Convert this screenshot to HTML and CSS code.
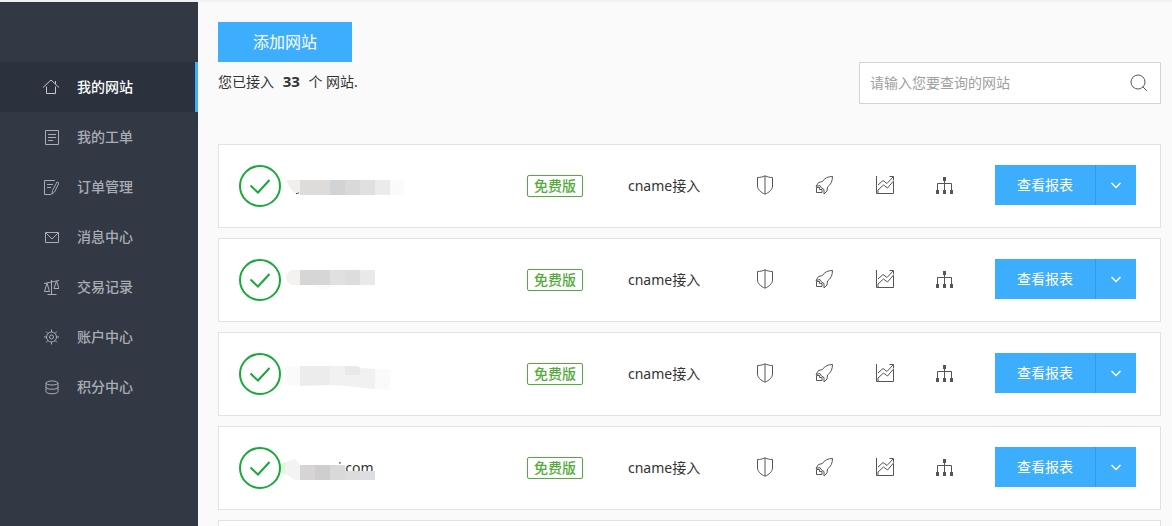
FILE: index.html
```
<!DOCTYPE html>
<html lang="zh-CN">
<head>
    <meta charset="UTF-8">
    <meta name="viewport" content="width=device-width, initial-scale=1.0">
    <title>我的网站</title>
    <link rel="stylesheet" href="styles.css">
</head>
<body>
    <!-- icon shapes used by the rows -->
    <svg class="symbols" aria-hidden="true">
        <symbol id="check" viewBox="0 0 42 42">
            <circle cx="21" cy="21" r="20" />
            <path d="M11.5 20.5l7.500 7L30.500 15" />
        </symbol>
        <symbol id="shield" viewBox="0 0 20 20">
            <path d="M10 .8C7.500 2 5 2.500 2.500 2.500V11c0 3.500 3.500 6.500 7.500 8.200 4-1.700 7.500-4.700 7.500-8.200V2.500C15 2.500 12.500 2 10 .8zM10 1v18" />
        </symbol>
        <symbol id="rocket" viewBox="0 0 20 20">
            <path d="M17.500 1.500C13 1.500 9.500 3 7.500 6.500L3.500 7.500 1 11.500l4-1 1.500 2.500 2.500 1.500V19l3-3 .5-4C16 9.500 17.500 6 17.500 1.500zM4.500 12.500h-3v5h5.500v-3H4.500z" />
        </symbol>
        <symbol id="chart" viewBox="0 0 20 20">
            <path d="M1.500 1v17.500h17V6.500M3 18v-3l5.500-5 4 3 6-7M3 10l5-4.500 4 3 6-6.500M14.500 1.500h4v4" />
        </symbol>
        <symbol id="tree" viewBox="0 0 20 20">
            <path d="M9.500 4v12M2.500 15V8.500h14V15" />
            <path class="solid" d="M8 2h3v4H8zM1 15h3v4H1zM8 15h3v4H8zM15 15h3v4h-3z" />
        </symbol>
        <symbol id="arrow" viewBox="0 0 12 12">
            <path d="M1.500 4L6 8.500 10.500 4" />
        </symbol>
    </svg>

    <div class="page">
        <nav class="sidebar">
            <a class="active" href="#">
                <svg viewBox="0 0 16 16"><path d="M0 8.500L8 1l8 7.500M3.500 7.500v7h9v-7M12.500 5V2" /></svg>
                <span>我的网站</span>
            </a>
            <a href="#">
                <svg viewBox="0 0 16 16"><path d="M2.500 1.500h13v14h-13zM5 5.500h8M5 8.500h8M5 11.500h5" /></svg>
                <span>我的工单</span>
            </a>
            <a href="#">
                <svg viewBox="0 0 16 16"><path d="M12 1.500H1.500v14h7M4 5.500h6M4 8.500h4M14 3l2 1-4.500 9-2.500 2 .5-3.500z" /></svg>
                <span>订单管理</span>
            </a>
            <a href="#">
                <svg viewBox="0 0 16 16"><path d="M2.500 3.500h13v10h-13zM3 4l6 6 6-6" /></svg>
                <span>消息中心</span>
            </a>
            <a href="#">
                <svg viewBox="0 0 16 16"><path d="M1 4.500l15-3M8.500 1v14M4.500 15.500h9M4 4l-2.500 8.500h5zM13.500 2L11 9.500h5z" /></svg>
                <span>交易记录</span>
            </a>
            <a href="#">
                <svg viewBox="0 0 16 16"><circle cx="8.500" cy="8" r="5" /><circle cx="8.500" cy="8" r="2" /><path d="M8.500 .5V3M8.500 13v2.500M1 8h2.500M13.500 8H16M3.200 2.700L5 4.500M12 11.500l1.800 1.800M3.200 13.300L5 11.500M12 4.500l1.800-1.800" /></svg>
                <span>账户中心</span>
            </a>
            <a href="#">
                <svg viewBox="0 0 16 16"><ellipse cx="9" cy="4" rx="6" ry="2" /><path d="M3 4v8.500c0 3 12 3 12 0V4M3 8c0 3 12 3 12 0" /></svg>
                <span>积分中心</span>
            </a>
        </nav>

        <main class="content">
            <header class="top">
                <div>
                    <button class="add" type="button">添加网站</button>
                    <p class="count">您已接入 <strong>33</strong> 个 网站.</p>
                </div>
                <form class="search">
                    <input type="text" placeholder="请输入您要查询的网站" aria-label="查询网站">
                    <button type="submit" aria-label="搜索">
                        <svg viewBox="0 0 18 18"><circle cx="8" cy="8" r="7" /><path d="M13 13l4 4" /></svg>
                    </button>
                </form>
            </header>

            <ul class="sites">
                <li class="site">
                    <div class="name">
                        <svg class="check"><use href="#check" /></svg>
                        <svg class="mask" viewBox="0 0 130 42">
                            <path fill="#f0efee" d="M6 15h13v15q-9-2-13-13z" />
                            <path fill="#dddcdb" d="M19 15h30v15H19z" />
                            <path fill="#d2d3d5" d="M49 15h15v15H49z" />
                            <path fill="#d9d9d9" d="M64 15h15v15H64z" />
                            <path fill="#dfe0e2" d="M79 15h15v15H79z" />
                            <path fill="#ebebec" d="M94 15h15v15H94z" />
                            <path fill="#fafafa" d="M109 15h14v15h-14z" />
                            <path fill="#444" d="M15 28h2l1-1v1l-2 1h-1z" />
                        </svg>
                    </div>
                    <div class="plan"><span>免费版</span></div>
                    <div class="access">cname接入</div>
                    <div class="tools">
                        <a href="#" aria-label="安全"><svg><use href="#shield" /></svg></a>
                        <a href="#" aria-label="加速"><svg><use href="#rocket" /></svg></a>
                        <a href="#" aria-label="统计"><svg><use href="#chart" /></svg></a>
                        <a href="#" aria-label="解析"><svg><use href="#tree" /></svg></a>
                    </div>
                    <div class="report">
                        <button type="button">查看报表</button>
                        <button class="more" type="button" aria-label="更多"><svg><use href="#arrow" /></svg></button>
                    </div>
                </li>
                <li class="site">
                    <div class="name">
                        <svg class="check"><use href="#check" /></svg>
                        <svg class="mask" viewBox="0 0 130 42">
                            <path fill="#f3f2f1" d="M19 11v15h-8q-6-3-6-8 0-5 6-7z" />
                            <path fill="#d6d6d6" d="M19 11h30v15H19z" />
                            <path fill="#e0e0e0" d="M49 11h15v15H49z" />
                            <path fill="#dddddd" d="M64 11h15v15H64z" />
                            <path fill="#e9e9e9" d="M79 11h15v15H79z" />
                            <path fill="#fafafa" d="M34 26h20q-6 6-16 4z" />
                        </svg>
                    </div>
                    <div class="plan"><span>免费版</span></div>
                    <div class="access">cname接入</div>
                    <div class="tools">
                        <a href="#" aria-label="安全"><svg><use href="#shield" /></svg></a>
                        <a href="#" aria-label="加速"><svg><use href="#rocket" /></svg></a>
                        <a href="#" aria-label="统计"><svg><use href="#chart" /></svg></a>
                        <a href="#" aria-label="解析"><svg><use href="#tree" /></svg></a>
                    </div>
                    <div class="report">
                        <button type="button">查看报表</button>
                        <button class="more" type="button" aria-label="更多"><svg><use href="#arrow" /></svg></button>
                    </div>
                </li>
                <li class="site">
                    <div class="name">
                        <svg class="check"><use href="#check" /></svg>
                        <svg class="mask" viewBox="0 0 130 42">
                            <path fill="#fafafa" d="M4 14l15-1v19H8q-5-6-4-18z" />
                            <path fill="#ececec" d="M19 13h30v19l-30 1z" />
                            <path fill="#f1f1f1" d="M49 13h15l15 2 15 1v20l-30-3-15-1z" />
                            <path fill="#e9e9e9" d="M64 13h11l4 1v8H64z" />
                            <path fill="#fafafa" d="M94 16l15 1v20l-15-1z" />
                        </svg>
                    </div>
                    <div class="plan"><span>免费版</span></div>
                    <div class="access">cname接入</div>
                    <div class="tools">
                        <a href="#" aria-label="安全"><svg><use href="#shield" /></svg></a>
                        <a href="#" aria-label="加速"><svg><use href="#rocket" /></svg></a>
                        <a href="#" aria-label="统计"><svg><use href="#chart" /></svg></a>
                        <a href="#" aria-label="解析"><svg><use href="#tree" /></svg></a>
                    </div>
                    <div class="report">
                        <button type="button">查看报表</button>
                        <button class="more" type="button" aria-label="更多"><svg><use href="#arrow" /></svg></button>
                    </div>
                </li>
                <li class="site">
                    <div class="name">
                        <svg class="check"><use href="#check" /></svg>
                        <span class="domain">i.com</span>
                        <svg class="mask" viewBox="0 0 130 42">
                            <path fill="#d5fbdc" d="M0 17l5-2v13l-5-3z" />
                            <path fill="#f3f3f3" d="M5 15l9-3 5 6v15h-6L4 26z" />
                            <path fill="#d6d4d4" d="M19 18h15v15H19z" />
                            <path fill="#cfcdcd" d="M34 18h15v15H34z" />
                            <path fill="#d9d9d9" d="M49 18h15v15H49z" />
                            <path fill="#dcdcdd" d="M64 24h15v9H64z" />
                            <path fill="#dcdee2" d="M79 24h15v9H79z" />
                        </svg>
                    </div>
                    <div class="plan"><span>免费版</span></div>
                    <div class="access">cname接入</div>
                    <div class="tools">
                        <a href="#" aria-label="安全"><svg><use href="#shield" /></svg></a>
                        <a href="#" aria-label="加速"><svg><use href="#rocket" /></svg></a>
                        <a href="#" aria-label="统计"><svg><use href="#chart" /></svg></a>
                        <a href="#" aria-label="解析"><svg><use href="#tree" /></svg></a>
                    </div>
                    <div class="report">
                        <button type="button">查看报表</button>
                        <button class="more" type="button" aria-label="更多"><svg><use href="#arrow" /></svg></button>
                    </div>
                </li>
                <li class="site"></li>
            </ul>
        </main>
    </div>
</body>
</html>
```

FILE: styles.css
```
* {
    box-sizing: border-box;
}
body {
    margin: 0;
    background: #fafafa;
    color: #333;
    font-family: "Noto Sans", "Noto Sans CJK SC", sans-serif;
    font-size: 14px;
}
button, input {
    font: inherit;
}
button {
    border: none;
    padding: 0;
    cursor: pointer;
}
svg {
    display: block;
    fill: none;
    stroke: currentColor;
}
.symbols {
    position: absolute;
    width: 0;
    height: 0;
}
.page {
    display: flex;
    height: 100vh;
    overflow: hidden;
    border-top: 2px solid #f0f1f3;
}

/* sidebar */
.sidebar {
    flex: 0 0 198px;
    padding-top: 60px;
    background: #323945;
}
.sidebar a {
    display: flex;
    align-items: center;
    gap: 18px;
    height: 50px;
    padding-left: 43px;
    color: #a9adb4;
    font-weight: 500;
    text-decoration: none;
}
.sidebar span {
    padding-bottom: 2px;
}
.sidebar svg {
    width: 16px;
    height: 16px;
}
.sidebar .active {
    background: #2b323e;
    border-right: 3px solid #3daefe;
    color: #fff;
}
.sidebar .active svg {
    color: #c4c7cb;
}

/* header */
.content {
    flex: 1;
    padding: 20px 11px 0 20px;
}
.top {
    display: flex;
    justify-content: space-between;
    align-items: flex-end;
    margin-bottom: 40px;
}
.add {
    display: block;
    width: 134px;
    height: 40px;
    padding-bottom: 2px;
    background: #3daefe;
    color: #fff;
    font-size: 16px;
}
.count {
    margin: 0;
    padding-bottom: 2px;
    line-height: 40px;
}
.count strong {
    margin: 0 5px;
    font-size: 15px;
    line-height: 20px;
}
.search {
    display: flex;
    width: 302px;
    height: 42px;
    border: 1px solid #d4d4d4;
    background: #fff;
}
.search input {
    flex: 1;
    min-width: 0;
    padding: 0 10px 2px;
    border: none;
    outline: none;
    background: none;
}
.search input::placeholder {
    color: #a0a0a0;
}
.search button {
    width: 42px;
    padding-left: 12px;
    background: none;
    color: #555;
}
.search svg {
    width: 18px;
    height: 18px;
}

/* site list */
.sites {
    display: flex;
    flex-direction: column;
    gap: 10px;
    margin: 0;
    padding: 0;
    list-style: none;
}
.site {
    display: grid;
    grid-template-columns: 1fr 101px 107px 260px 141px;
    min-height: 84px;
    padding: 20px 24px 20px 20px;
    border: 1px solid #e2e2e2;
    background: #fff;
}
.name {
    display: flex;
    position: relative;
}
.check {
    width: 42px;
    height: 42px;
    color: #1aa83a;
    stroke-width: 2;
}
.domain {
    padding-left: 57px;
    line-height: 42px;
}
.mask {
    position: absolute;
    top: 0;
    left: 42px;
    width: 130px;
    height: 42px;
    stroke: none;
}
.plan {
    display: flex;
    align-items: center;
}
.plan span {
    padding: 0 6px;
    border: 1px solid #54ab3c;
    border-radius: 2px;
    color: #54ab3c;
    font-weight: 500;
    line-height: 20px;
}
.access {
    line-height: 42px;
}
.tools {
    display: flex;
    height: 40px;
}
.tools a {
    display: flex;
    align-items: center;
    justify-content: center;
    width: 60px;
    color: #555;
}
.tools svg {
    width: 20px;
    height: 20px;
}
.solid {
    fill: currentColor;
    stroke: none;
}
.report {
    display: flex;
    height: 40px;
}
.report button {
    flex: 1;
    padding-bottom: 2px;
    background: #3daefe;
    color: #fff;
}
.report .more {
    display: flex;
    flex: 0 0 41px;
    align-items: center;
    justify-content: center;
    padding: 0;
    border-left: 1px solid #3599e3;
}
.more svg {
    width: 12px;
    height: 12px;
    stroke-width: 1.5;
}
```
